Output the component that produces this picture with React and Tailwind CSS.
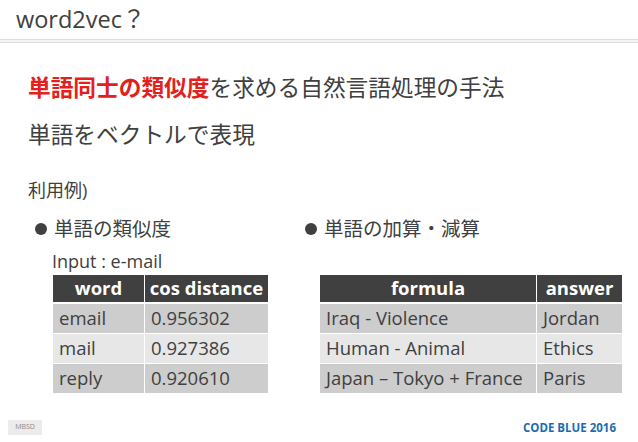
import React from 'react';

const FONT = '"Open Sans", "Noto Sans CJK JP", sans-serif';

const wordRows = [
    ['email', '0.956302'],
    ['mail', '0.927386'],
    ['reply', '0.920610'],
];

const calcRows = [
    ['Iraq - Violence', 'Jordan'],
    ['Human - Animal', 'Ethics'],
    ['Japan – Tokyo + France', 'Paris'],
];

const DataTable = ({ cols, head, rows }) => (
    <div className="flex flex-col text-[18.5px] text-[#404040]">
        {/* header */}
        <div className={`grid ${cols} gap-x-px h-[27px]`}>
            {head.map((h) => (
                <div key={h} className="bg-[#404040] text-white font-bold flex items-center justify-center leading-none">
                    {h}
                </div>
            ))}
        </div>
        <div className="flex flex-col gap-y-px mt-[2px]">
            {rows.map((row, i) => (
                <div key={i} className={`grid ${cols} gap-x-px h-[29px]`}>
                    {row.map((cell, j) => (
                        <div
                            key={j}
                            className={`${i % 2 === 1 ? 'bg-[#e7e7e7]' : 'bg-[#cdcdcd]'} flex items-center pl-[6px] leading-none whitespace-nowrap`}
                        >
                            {cell}
                        </div>
                    ))}
                </div>
            ))}
        </div>
    </div>
);

const Bullet = ({ children }) => (
    <div className="flex items-center h-[26px] text-[19.5px] text-[#404040]">
        <span className="w-[12px] h-[12px] rounded-full bg-[#404040] mr-[7px]"></span>
        {children}
    </div>
);

export default function App() {
    return (
        <div className="w-[638px] h-[442px] bg-white flex flex-col overflow-hidden" style={{ fontFamily: FONT }}>
            {/* Title bar */}
            <div className="h-[39px] flex items-center pl-[16px] text-[23.5px] text-[#404040]">
                word2vec？
            </div>
            <div className="h-[4px] border-y border-[#dedede] bg-[#f5f5f5]"></div>

            {/* Body */}
            <div className="pl-[28px] flex flex-col">
                <div className="mt-[32px] h-[27px] flex items-center text-[22.7px] text-[#404040] whitespace-nowrap">
                    <span className="text-[#e3201b] font-bold">単語同士の類似度</span>
                    を求める自然言語処理の手法
                </div>
                <div className="mt-[20px] h-[27px] flex items-center text-[22.7px] text-[#404040]">
                    単語をベクトルで表現
                </div>
                <div className="mt-[29px] h-[24px] flex items-center text-[18px] text-[#404040]">
                    利用例)
                </div>

                <div className="mt-[14px] flex">
                    <div className="w-[277px] pl-[7px] flex flex-col">
                        <Bullet>単語の類似度</Bullet>
                        <div className="mt-[8px] h-[22px] pl-[17px] flex items-center text-[18px] text-[#404040]">
                            Input : e-mail
                        </div>
                        <div className="mt-[3px] pl-[18px]">
                            <div className="w-[215px]">
                                <DataTable cols="grid-cols-[91px_123px]" head={['word', 'cos distance']} rows={wordRows} />
                            </div>
                        </div>
                    </div>
                    <div className="flex flex-col">
                        <Bullet>単語の加算・減算</Bullet>
                        <div className="mt-[33px] pl-[15px]">
                            <div className="w-[302px]">
                                <DataTable cols="grid-cols-[216px_85px]" head={['formula', 'answer']} rows={calcRows} />
                            </div>
                        </div>
                    </div>
                </div>
            </div>

            {/* Footer */}
            <div className="mt-auto mb-[6px] flex items-center justify-between pl-[8px] pr-[22px]">
                <div className="w-[34px] h-[15px] bg-[#ececec] flex items-center justify-center text-[7px] text-[#8a8a8a]">
                    MBSD
                </div>
                <div className="text-[11.5px] font-bold text-[#1b6bb3]">CODE BLUE 2016</div>
            </div>
        </div>
    );
}
